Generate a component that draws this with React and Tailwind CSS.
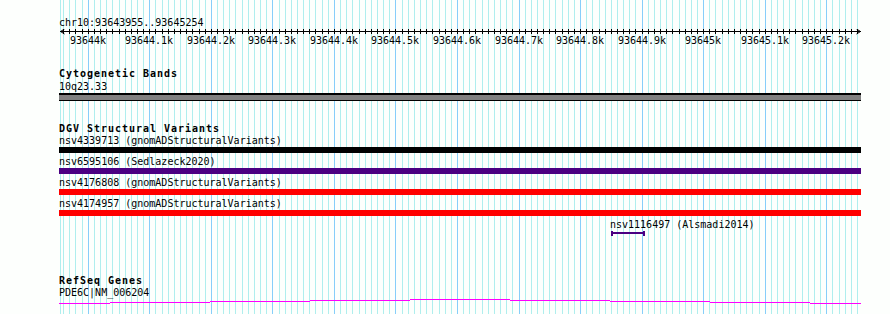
import React from 'react';

const START = 93643955;
const END = 93645254;
const PX = 800 / 1300; // pixels per base
const ORIGIN = 1.6; // where START sits inside the track column
const TRACK_W = 802;
const H = 314;

const toX = (bp) => ORIGIN + (bp - START) * PX;

const gridBps = [];
for (let bp = Math.ceil(START / 10) * 10; bp <= END; bp += 10) gridBps.push(bp);
const majors = gridBps.filter((bp) => bp % 100 === 0);

const label = (bp) => `${bp / 1000}k`;

const variants = [
  { id: 'nsv4339713', src: 'gnomADStructuralVariants', bar: 'bg-black' },
  { id: 'nsv6595106', src: 'Sedlazeck2020', bar: 'bg-[#4b0082]' },
  { id: 'nsv4176808', src: 'gnomADStructuralVariants', bar: 'bg-[#ff0000]' },
  { id: 'nsv4174957', src: 'gnomADStructuralVariants', bar: 'bg-[#ff0000]' },
];

const smallVariant = { id: 'nsv1116497', src: 'Alsmadi2014', start: 93644848, end: 93644903 };

// intron line of the gene, drawn as the browser does: 1px steps
const steps = [
  [0, 51, 4],
  [51, 151, 3],
  [151, 251, 2],
  [251, 351, 1],
  [351, 451, 0],
  [451, 551, 1],
  [551, 651, 2],
  [651, 751, 3],
  [751, 802, 4],
];

const txt = 'h-[12px] text-[10px] leading-[12px] whitespace-nowrap';
const title = 'h-[13px] text-[10px] leading-[13px] font-bold tracking-[0.98px] whitespace-nowrap';

const Grid = () => (
  <svg className="absolute left-[59px] top-0" width={TRACK_W} height={H} shapeRendering="crispEdges">
    <rect x={1} y={0} width={1} height={H} fill="#afeeee" />
    {gridBps.map((bp) => (
      <rect
        key={bp}
        x={Math.floor(toX(bp))}
        y={0}
        width={1}
        height={H}
        fill={bp % 100 === 0 ? '#87cefa' : '#afeeee'}
      />
    ))}
  </svg>
);

const Ruler = () => (
  <div className="relative h-[18px]">
    <svg className="absolute left-0 top-0" width={TRACK_W + 1} height={7} shapeRendering="crispEdges">
      <rect x={1} y={2} width={801} height={1} fill="#000" />
      {gridBps.map((bp) => (
        <rect key={bp} x={Math.floor(toX(bp))} y={0} width={1} height={5} fill="#000" />
      ))}
      <path d="M1.5 2.5 L5.5 0 M1.5 2.5 L5.5 5" stroke="#000" strokeWidth="1" fill="none" shapeRendering="auto" />
      <path d="M801.5 2.5 L797.5 0 M801.5 2.5 L797.5 5" stroke="#000" strokeWidth="1" fill="none" shapeRendering="auto" />
    </svg>
    {majors.map((bp) => (
      <span
        key={bp}
        className={`absolute top-[6px] -translate-x-1/2 ${txt}`}
        style={{ left: Math.floor(toX(bp)) }}
      >
        {label(bp)}
      </span>
    ))}
  </div>
);

export default function App() {
  const sx = toX(smallVariant.start);
  const sw = toX(smallVariant.end) - sx;

  return (
    <div className="relative w-[890px] h-[314px] overflow-hidden bg-[#fdfffd] font-['DejaVu_Sans_Mono',monospace] text-black">
      <Grid />
      <div className="relative ml-[59px] w-[802px] pt-[17px]">
        <div className={txt}>chr10:93643955..93645254</div>
        <Ruler />

        {/* Cytogenetic bands */}
        <div className={`mt-[20px] ${title}`}>Cytogenetic Bands</div>
        <div className={`mt-[1px] ${txt}`}>10q23.33</div>
        <div className="h-[8px] bg-[#808080] border-t-2 border-b border-black" />

        {/* DGV */}
        <div className={`mt-[21px] ${title}`}>DGV Structural Variants</div>
        {variants.map((v) => (
          <div key={v.id} className="mb-[3px]">
            <div className={txt}>
              {v.id} ({v.src})
            </div>
            <div className={`h-[6px] ${v.bar}`} />
          </div>
        ))}
        <div style={{ marginLeft: Math.round(sx) }} className="w-max">
          <div className={txt}>
            {smallVariant.id} ({smallVariant.src})
          </div>
          <svg width={Math.round(sw) + 1} height={6} shapeRendering="crispEdges" className="block">
            <rect x={1} y={1} width={Math.round(sw) - 1} height={2} fill="#4b0082" />
            <rect x={1} y={0} width={2} height={5} fill="#4b0082" />
            <rect x={Math.round(sw) - 1} y={0} width={2} height={5} fill="#4b0082" />
          </svg>
        </div>

        {/* RefSeq */}
        <div className={`mt-[37px] ${title}`}>RefSeq Genes</div>
        <div className={txt}>PDE6C|NM_006204</div>
        <svg width={TRACK_W} height={5} shapeRendering="crispEdges" className="block">
          {steps.map(([a, b, y]) => (
            <rect key={a} x={a} y={y} width={b - a} height={1} fill="#ff00ff" />
          ))}
        </svg>
      </div>
    </div>
  );
}
